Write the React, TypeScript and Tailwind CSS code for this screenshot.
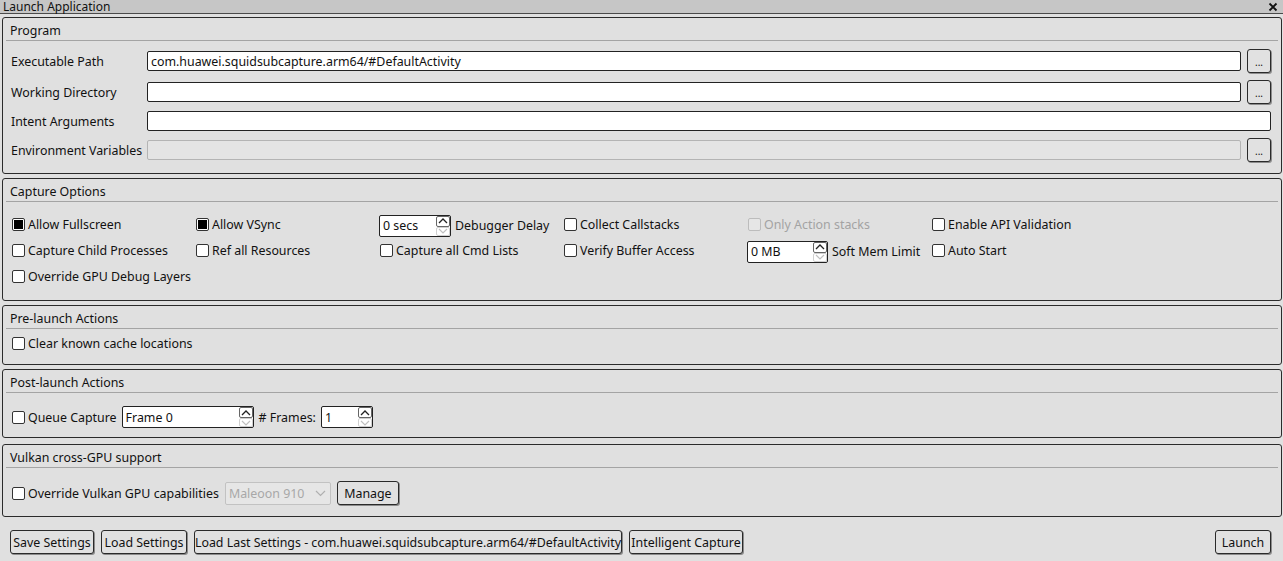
import React from 'react';

const font = { fontFamily: '"Noto Sans", "Open Sans", Arial, sans-serif' };

function Check({ checked = false, disabled = false, label }: { checked?: boolean; disabled?: boolean; label: string }) {
  return (
    <div className="flex items-center h-[20px] whitespace-nowrap">
      <div
        className={
          'w-[13px] h-[13px] rounded-[2px] border p-[1px] shrink-0 ' +
          (disabled ? 'border-[#bcbcbc] bg-[#e6e6e6]' : 'border-[#333] bg-white')
        }
      >
        {checked && <div className="w-full h-full bg-black" />}
      </div>
      <span className={'ml-[3px] pt-[2px] ' + (disabled ? 'text-[#a3a3a3]' : 'text-[#111]')}>{label}</span>
    </div>
  );
}

function Spin({ value, className }: { value: string; className: string }) {
  return (
    <div className={'flex h-[22px] rounded-[2px] border border-[#222] bg-white shrink-0 ' + className}>
      <div className="flex-1 flex items-center pl-[3px] pt-[2px] text-[#111]">{value}</div>
      <div className="w-[14px] flex flex-col">
        <div className="h-[11px] flex items-center justify-center border border-[#666] rounded-[2px] bg-white">
          <svg width="10" height="6" viewBox="0 0 10 6">
            <path d="M1 5 L5 1 L9 5" fill="none" stroke="#222" strokeWidth="1.3" />
          </svg>
        </div>
        <div className="h-[9px] flex items-center justify-center border border-[#d0d0d0] rounded-[2px]">
          <svg width="10" height="6" viewBox="0 0 10 6">
            <path d="M1 1 L5 5 L9 1" fill="none" stroke="#c0c0c0" strokeWidth="1.2" />
          </svg>
        </div>
      </div>
    </div>
  );
}

function Btn({ children, className = '' }: { children: React.ReactNode; className?: string }) {
  return (
    <div
      className={
        'h-[24px] flex items-center justify-center pt-[2px] rounded-[3px] border border-[#2a2a2a] bg-[#e1e1e1] shadow-[1px_1px_0_#8c8c8c] whitespace-nowrap text-[#111] shrink-0 ' +
        className
      }
    >
      {children}
    </div>
  );
}

function Group({ title, className, children }: { title: string; className: string; children: React.ReactNode }) {
  return (
    <div className={'border border-[#2b2b2b] rounded-[3px] flex flex-col ' + className}>
      <div className="h-[22px] pt-[4px] flex items-center pl-[7px] text-[#111]">{title}</div>
      <div className="h-px bg-[#a4a4a4] mx-[3px]" />
      {children}
    </div>
  );
}

function PathRow({ label, value = '', disabled = false, button = true, className = '' }: { label: string; value?: string; disabled?: boolean; button?: boolean; className?: string }) {
  return (
    <div className={'flex items-center h-[24px] pl-[8px] pr-[10px] ' + className}>
      <div className="w-[136px] shrink-0 pt-[2px] text-[#111]">{label}</div>
      <div
        className={
          'flex-1 h-[20px] rounded-[2px] border flex items-center pl-[3px] pt-[2px] ' +
          (disabled ? 'border-[#b4b4b4] bg-[#e4e4e4]' : 'border-[#222] bg-white text-[#111]')
        }
      >
        {value}
      </div>
      {button && <Btn className="w-[24px] h-[23px] ml-[6px] text-[10px]">...</Btn>}
    </div>
  );
}

export default function App() {
  return (
    <div className="w-[1283px] h-[561px] bg-[#e0e0e0] text-[12.4px] leading-none overflow-hidden" style={font}>
      {/* Title bar */}
      <div className="h-[14px] bg-[#c6c6c6] border-b border-[#4a4a4a] flex items-center justify-between pl-[3px] pr-[3px]">
        <span className="text-[#111] text-[12px] leading-[12px]">Launch Application</span>
        <svg width="10" height="10" viewBox="0 0 10 10" className="mr-[2px]">
          <path d="M1.5 1.5 L8.5 8.5 M8.5 1.5 L1.5 8.5" stroke="#111" strokeWidth="1.8" />
        </svg>
      </div>

      <div className="pl-[2px] pr-[1px] pt-[3px] flex flex-col">
        <Group title="Program" className="h-[157px]">
          <PathRow className="mt-[8px]" label="Executable Path" value="com.huawei.squidsubcapture.arm64/#DefaultActivity" />
          <PathRow className="mt-[7px]" label="Working Directory" />
          <PathRow className="mt-[5px]" label="Intent Arguments" button={false} />
          <PathRow className="mt-[5px]" label="Environment Variables" disabled />
        </Group>

        <Group title="Capture Options" className="h-[123px] mt-[4px]">
          <div className="mt-[9px] pl-[9px] grid grid-cols-[184px_184px_184px_184px_184px_auto] auto-rows-[26px] items-center">
            <Check checked label="Allow Fullscreen" />
            <Check checked label="Allow VSync" />
            <div className="flex items-center -ml-[1px] mt-[3px]">
              <Spin value="0 secs" className="w-[72px]" />
              <span className="ml-[4px] pt-[2px] text-[#111]">Debugger Delay</span>
            </div>
            <Check label="Collect Callstacks" />
            <Check disabled label="Only Action stacks" />
            <Check label="Enable API Validation" />

            <Check label="Capture Child Processes" />
            <Check label="Ref all Resources" />
            <Check label="Capture all Cmd Lists" />
            <Check label="Verify Buffer Access" />
            <div className="flex items-center -ml-[1px] mt-[3px]">
              <Spin value="0 MB" className="w-[81px]" />
              <span className="ml-[4px] pt-[2px] text-[#111]">Soft Mem Limit</span>
            </div>
            <Check label="Auto Start" />

            <Check label="Override GPU Debug Layers" />
          </div>
        </Group>

        <Group title="Pre-launch Actions" className="h-[60px] mt-[4px]">
          <div className="mt-[4px] pl-[9px]">
            <Check label="Clear known cache locations" />
          </div>
        </Group>

        <Group title="Post-launch Actions" className="h-[69px] mt-[4px]">
          <div className="mt-[12px] pl-[9px] h-[24px] flex items-center">
            <Check label="Queue Capture" />
            <Spin value="Frame 0" className="w-[132px] ml-[5px]" />
            <span className="ml-[5px] pt-[2px] text-[#111]"># Frames:</span>
            <Spin value="1" className="w-[52px] ml-[5px]" />
          </div>
        </Group>

        <Group title="Vulkan cross-GPU support" className="h-[73px] mt-[6px]">
          <div className="mt-[13px] pl-[9px] h-[24px] flex items-center">
            <Check label="Override Vulkan GPU capabilities" />
            <div className="ml-[6px] w-[106px] h-[23px] rounded-[2px] border border-[#c2c2c2] bg-[#e6e6e6] flex items-center justify-between pl-[3px] pr-[4px] text-[#a8a8a8]">
              <span className="pt-[2px]">Maleoon 910</span>
              <svg width="11" height="7" viewBox="0 0 11 7">
                <path d="M1 1 L5.5 5.5 L10 1" fill="none" stroke="#b0b0b0" strokeWidth="1.2" />
              </svg>
            </div>
            <Btn className="w-[62px] ml-[6px]">Manage</Btn>
          </div>
        </Group>

        {/* Footer buttons */}
        <div className="mt-[13px] flex items-center pl-[8px] pr-[11px]">
          <Btn className="w-[84px]">Save Settings</Btn>
          <Btn className="w-[86px] ml-[7px]">Load Settings</Btn>
          <Btn className="w-[428px] ml-[7px]">Load Last Settings - com.huawei.squidsubcapture.arm64/#DefaultActivity</Btn>
          <Btn className="w-[114px] ml-[7px]">Intelligent Capture</Btn>
          <div className="flex-1" />
          <Btn className="w-[56px]">Launch</Btn>
        </div>
      </div>
    </div>
  );
}
